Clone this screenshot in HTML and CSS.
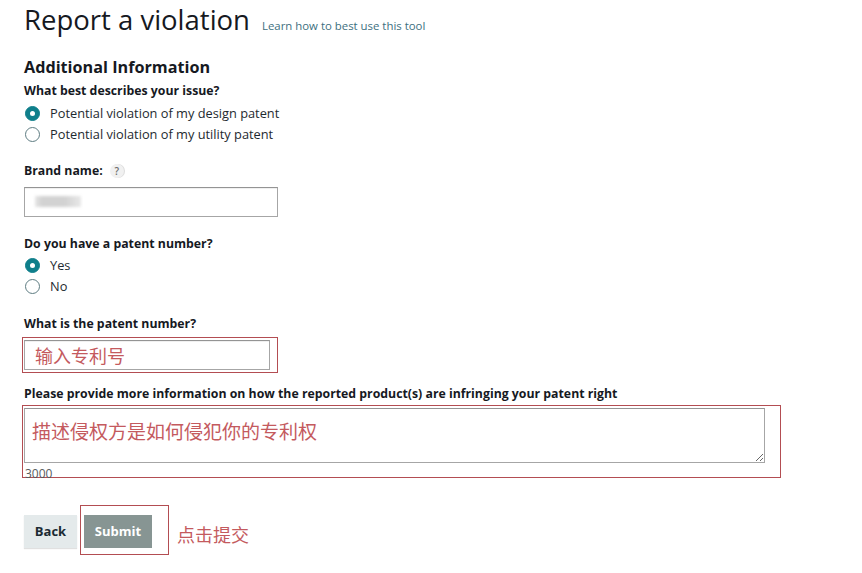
FILE: index.html
```html
<!DOCTYPE html>
<html lang="en">
<head>
<meta charset="utf-8">
<title>Report a violation</title>
<link rel="stylesheet" href="styles.css">
</head>
<body>
<div class="page">
  <div class="title-row">
    <h1 class="title">Report a violation</h1>
    <a class="help-link" href="#">Learn how to best use this tool</a>
  </div>

  <h2 class="section-title">Additional Information</h2>
  <div class="label">What best describes your issue?</div>
  <div class="radio-row"><span class="radio checked"></span><span class="radio-text">Potential violation of my design patent</span></div>
  <div class="radio-row"><span class="radio"></span><span class="radio-text">Potential violation of my utility patent</span></div>

  <div class="label gap-lg">Brand name: <span class="help-q">?</span></div>
  <div class="input brand-input"><span class="blur-blob"></span></div>

  <div class="label gap-lg">Do you have a patent number?</div>
  <div class="radio-row"><span class="radio checked"></span><span class="radio-text">Yes</span></div>
  <div class="radio-row"><span class="radio"></span><span class="radio-text">No</span></div>

  <div class="label gap-lg">What is the patent number?</div>
  <div class="mark mark-patent">
    <div class="input patent-input"><span class="cn-note">输入专利号</span></div>
  </div>

  <div class="label gap-md">Please provide more information on how the reported product(s) are infringing your patent right</div>
  <div class="mark mark-text">
    <textarea class="textarea">描述侵权方是如何侵犯你的专利权</textarea>
    <div class="counter">3000</div>
  </div>

  <div class="actions">
    <button class="btn btn-back" type="button">Back</button>
    <div class="mark mark-submit">
      <button class="btn btn-submit" type="button">Submit</button>
    </div>
    <span class="cn-note action-note">点击提交</span>
  </div>
</div>
</body>
</html>
```

FILE: styles.css
```css
html, body {
  margin: 0;
  padding: 0;
  background: #ffffff;
}

.page {
  padding: 0 0 0 24px;
  font-family: "Open Sans", "Noto Sans", "Noto Sans CJK SC", sans-serif;
  color: #16191f;
}

.title-row {
  display: flex;
  align-items: baseline;
  gap: 12px;
  padding-top: 1px;
}

.title {
  margin: 0;
  font-size: 27.5px;
  font-weight: 400;
  line-height: 38px;
  color: #16191f;
}

.help-link {
  font-size: 11.4px;
  color: #3d6f80;
  text-decoration: none;
}

.section-title {
  margin: 17px 0 0 0;
  font-size: 16.2px;
  font-weight: 700;
  line-height: 22px;
}

.label {
  margin-top: 4px;
  font-size: 12.3px;
  font-weight: 700;
  line-height: 18px;
  display: flex;
  align-items: center;
  gap: 7px;
}

.gap-lg { margin-top: 17.5px; }
.gap-md { margin-top: 12px; }

.radio-row {
  display: flex;
  align-items: center;
  height: 21px;
  font-size: 12.8px;
  line-height: 21px;
}

.label + .radio-row { margin-top: 2.5px; }

.radio {
  box-sizing: border-box;
  width: 15px;
  height: 15px;
  border-radius: 50%;
  border: 1px solid #5e7c82;
  background: #ffffff;
  margin-left: 1px;
  margin-right: 10px;
  display: flex;
  align-items: center;
  justify-content: center;
}

.radio.checked {
  border-color: #0f7f8b;
  background: #0f7f8b;
}

.radio.checked::after {
  content: "";
  width: 5px;
  height: 5px;
  border-radius: 50%;
  background: #ffffff;
}

.radio-text {
  color: #1e2a30;
}

.help-q {
  box-sizing: border-box;
  display: inline-flex;
  align-items: center;
  justify-content: center;
  width: 14px;
  height: 14px;
  border-radius: 50%;
  background: #f1f1f1;
  box-shadow: 1px 0 0 #dcdcdc;
  color: #6d6d6d;
  font-size: 10px;
  font-weight: 600;
  line-height: 14px;
}

.input {
  box-sizing: border-box;
  height: 30px;
  border: 1px solid #a6a6a6;
  border-top-color: #949494;
  background: #ffffff;
  box-shadow: inset 0 1px 0 rgba(0,0,0,0.06);
}

.brand-input {
  width: 254px;
  margin-top: 7px;
  padding: 8px 0 0 10px;
}

.blur-blob {
  display: block;
  width: 46px;
  height: 11px;
  background: linear-gradient(90deg, #e6e6e6 0%, #d2d2d2 15%, #d2d2d2 65%, #e8e8e8 100%);
  filter: blur(1.5px);
}

.mark {
  box-sizing: border-box;
  border: 1px solid #b34d52;
}

.mark-patent {
  width: 256px;
  margin: 4px 0 0 -2px;
  padding: 2px 7px 2px 1px;
}

.patent-input {
  width: 246px;
  display: flex;
  align-items: center;
  padding-left: 10px;
}

.cn-note {
  font-family: "Noto Sans CJK SC", "Noto Sans", sans-serif;
  color: #c45a5e;
  font-size: 18px;
  line-height: 24px;
}

.mark-text {
  width: 759px;
  height: 73px;
  margin: 2px 0 0 -2px;
  padding: 2px 15px 0 1px;
}

.textarea {
  display: block;
  box-sizing: border-box;
  width: 741px;
  height: 55px;
  margin: 0;
  padding: 11px 7px 0 7px;
  border: 1px solid #a6a6a6;
  border-top-color: #949494;
  font-family: "Noto Sans CJK SC", "Noto Sans", sans-serif;
  font-size: 19px;
  line-height: 22px;
  color: #c45a5e;
  resize: vertical;
  outline: none;
}

.counter {
  font-size: 12px;
  line-height: 22px;
  color: #555b5e;
  margin-left: 1px;
}

.actions {
  display: flex;
  align-items: flex-start;
  margin-top: 27px;
}

.btn {
  box-sizing: border-box;
  height: 33px;
  border: 0;
  margin: 0;
  font-family: "Open Sans", "Noto Sans", sans-serif;
  font-size: 13px;
  font-weight: 700;
  cursor: pointer;
}

.btn-back {
  width: 53px;
  margin-top: 10px;
  background: #e4eaeb;
  color: #1b2a33;
  box-shadow: 0 1px 1px rgba(0,0,0,0.12);
}

.mark-submit {
  margin-left: 3px;
  padding: 9px 16px 6px 3px;
}

.btn-submit {
  display: block;
  width: 68px;
  background: #879593;
  color: #ffffff;
}

.action-note {
  margin: 17px 0 0 8px;
}
```
